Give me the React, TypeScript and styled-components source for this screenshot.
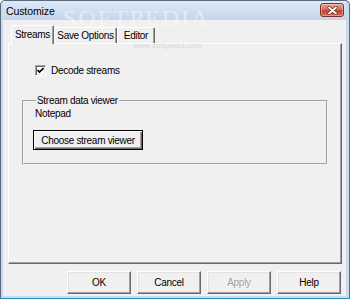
import React from 'react'
import styled, { createGlobalStyle } from 'styled-components'

// Global

const GlobalStyle = createGlobalStyle`
  html, body {
    margin: 0;
    padding: 0;
    background: #ffffff;
  }
  body {
    font-family: "Liberation Sans", Arial, sans-serif;
  }
`

// Props

interface ITabProps {
  active?: boolean
  w: number
}
interface IButtonProps {
  focused?: boolean
  disabled?: boolean
  w?: number
}

// Window frame

const Window = styled.div`
  position: relative;
  width: 350px;
  height: 299px;
  box-sizing: border-box;
  display: flex;
  flex-direction: column;
  background: #c8daee;
  border: 1px solid #5a6b80;
  border-bottom-color: #2a8fc4;
  border-radius: 5px 5px 0 0;
  padding: 0 3px 2px 2px;
  overflow: hidden;
`

const TitleBar = styled.div`
  height: 19px;
  display: flex;
  align-items: center;
  justify-content: space-between;
  background: linear-gradient(#dfe9f6, #c3d6ec);
  padding: 0 2px 0 3px;
`

const Title = styled.span`
  font-size: 10.5px;
  color: #000;
  letter-spacing: -0.1px;
`

const CloseButton = styled.div`
  width: 22px;
  height: 12px;
  margin-top: -1px;
  display: flex;
  align-items: center;
  justify-content: center;
  border: 1px solid #7a3426;
  border-radius: 3px;
  background: linear-gradient(#e9a797 0%, #d4705c 45%, #c0452e 55%, #d26a52 100%);
  box-shadow: inset 0 0 0 1px rgba(255, 255, 255, 0.35);
`

const Client = styled.div`
  flex: 1;
  display: flex;
  flex-direction: column;
  background: #f0f0f0;
  padding: 5px 4px 2px 5px;
  font-size: 10px;
  letter-spacing: -0.3px;
  color: #000;
`

// Tabs

const TabRow = styled.div`
  height: 18px;
  display: flex;
  align-items: flex-end;
  padding-left: 3px;
  position: relative;
  z-index: 1;
`

const Tab = styled.div<ITabProps>`
  box-sizing: border-box;
  width: ${p => p.w}px;
  height: ${p => (p.active ? 19 : 16)}px;
  margin-bottom: ${p => (p.active ? -1 : 0)}px;
  display: flex;
  align-items: center;
  justify-content: center;
  padding-bottom: ${p => (p.active ? 2 : 0)}px;
  background: #f0f0f0;
  border-top: 1px solid #ffffff;
  border-left: 1px solid #ffffff;
  border-right: 1px solid #696969;
  border-radius: 2px 2px 0 0;
  box-shadow: inset -1px 0 #a0a0a0;
`

const Panel = styled.div`
  flex: 1;
  display: flex;
  flex-direction: column;
  border: 1px solid;
  border-color: #ffffff #696969 #696969 #ffffff;
  box-shadow: inset -1px -1px #a0a0a0;
  padding: 0 13px;
`

// Panel content

const CheckRow = styled.label`
  height: 12px;
  margin: 20px 0 0 13px;
  display: flex;
  align-items: center;
  gap: 5px;
`

const CheckBox = styled.span`
  box-sizing: border-box;
  width: 11px;
  height: 11px;
  display: flex;
  align-items: center;
  justify-content: center;
  background: #ffffff;
  border: 1px solid;
  border-color: #a0a0a0 #ffffff #ffffff #a0a0a0;
  box-shadow: inset 1px 1px #696969, inset -1px -1px #e3e3e3;
`

const Group = styled.fieldset`
  margin: 19px 0 0 0;
  padding: 1px 11px 13px 9px;
  border: 2px groove #f4f4f4;
  min-width: 0;
`

const Legend = styled.legend`
  padding: 0 1px;
  margin-left: 3px;
  line-height: 12px;
`

const Value = styled.div`
  line-height: 12px;
  margin-left: 2px;
`

const Button = styled.button<IButtonProps>`
  box-sizing: border-box;
  width: ${p => p.w ?? 64}px;
  height: ${p => (p.focused ? 20 : 23)}px;
  font-family: "Liberation Sans", Arial, sans-serif;
  font-size: 10px;
  letter-spacing: -0.3px;
  padding: 0;
  color: ${p => (p.disabled ? '#a0a0a0' : '#000')};
  text-shadow: ${p => (p.disabled ? '1px 1px #ffffff' : 'none')};
  background: #f0f0f0;
  border: 1px solid;
  border-color: ${p => (p.focused ? '#000' : '#ffffff #696969 #696969 #ffffff')};
  box-shadow: ${p =>
    p.focused
      ? 'inset 1px 1px #ffffff, inset -1px -1px #696969, inset -2px -2px #a0a0a0'
      : 'inset -1px -1px #a0a0a0, inset 1px 1px #e3e3e3'};
  outline: none;
`

const ChooseWrap = styled.div`
  margin-top: 10px;
`

const ButtonRow = styled.div`
  display: flex;
  justify-content: flex-end;
  gap: 6px;
  margin: 7px 1px 0 0;
`

// Watermark lying over the screenshot

const Watermark = styled.div`
  position: absolute;
  left: 62px;
  top: 4px;
  font-family: "Liberation Serif", serif;
  font-size: 24px;
  letter-spacing: 2px;
  color: rgba(255, 255, 255, 0.45);
  pointer-events: none;
`

const WatermarkUrl = styled.div`
  position: absolute;
  left: 132px;
  top: 40px;
  font-size: 8px;
  color: rgba(160, 160, 160, 0.35);
  pointer-events: none;
`

// Component

export default function App() {
  return (
    <>
      <GlobalStyle />
      <Window>
        <TitleBar>
          <Title>Customize</Title>
          <CloseButton>
            <svg width="11" height="9" viewBox="0 0 11 9">
              <path d="M2 1.5 L9 7.5 M9 1.5 L2 7.5" stroke="#5a2418" strokeWidth="3" strokeLinecap="round" />
              <path d="M2 1.5 L9 7.5 M9 1.5 L2 7.5" stroke="#ffffff" strokeWidth="1.8" strokeLinecap="round" />
            </svg>
          </CloseButton>
        </TitleBar>
        <Client>
          <TabRow>
            <Tab active w={43}>Streams</Tab>
            <Tab w={63}>Save Options</Tab>
            <Tab w={38}>Editor</Tab>
          </TabRow>
          <Panel>
            <CheckRow>
              <CheckBox>
                <svg width="7" height="7" viewBox="0 0 7 7">
                  <path d="M0.5 3 L2.5 5 L6.5 1" stroke="#000" strokeWidth="1.6" fill="none" />
                </svg>
              </CheckBox>
              Decode streams
            </CheckRow>
            <Group>
              <Legend>Stream data viewer</Legend>
              <Value>Notepad</Value>
              <ChooseWrap>
                <Button focused w={110}>Choose stream viewer</Button>
              </ChooseWrap>
            </Group>
          </Panel>
          <ButtonRow>
            <Button>OK</Button>
            <Button>Cancel</Button>
            <Button disabled>Apply</Button>
            <Button>Help</Button>
          </ButtonRow>
        </Client>
        <Watermark>SOFTPEDIA</Watermark>
        <WatermarkUrl>www.softpedia.com</WatermarkUrl>
      </Window>
    </>
  )
}
